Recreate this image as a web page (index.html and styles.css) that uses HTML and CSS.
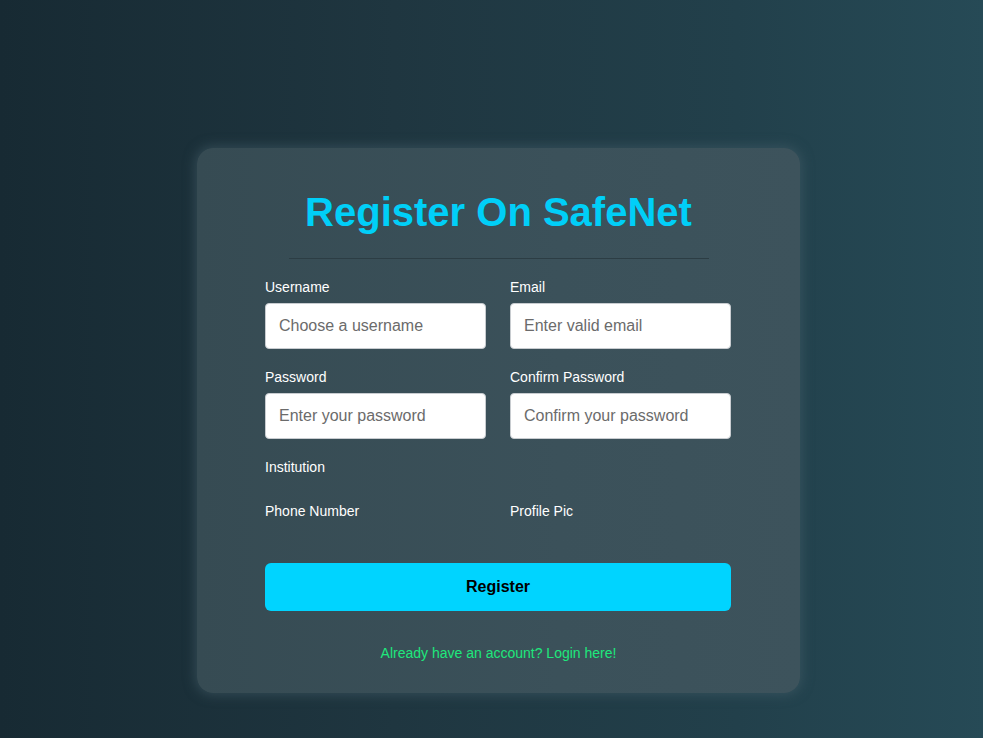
FILE: index.html
```html
<!DOCTYPE html>
<html lang="en">
<head>
<meta charset="utf-8">
<title>Register On SafeNet</title>
<link rel="stylesheet" href="styles.css">
</head>
<body>
<main class="page">
  <section class="card">
    <h1 class="title">Register On SafeNet</h1>
    <form class="form">
      <div class="grid">
        <div class="group">
          <label class="label" for="u">Username</label>
          <input class="input" id="u" type="text" placeholder="Choose a username">
        </div>
        <div class="group">
          <label class="label" for="e">Email</label>
          <input class="input" id="e" type="email" placeholder="Enter valid email">
        </div>
        <div class="group">
          <label class="label" for="p">Password</label>
          <input class="input" id="p" type="password" placeholder="Enter your password">
        </div>
        <div class="group">
          <label class="label" for="c">Confirm Password</label>
          <input class="input" id="c" type="password" placeholder="Confirm your password">
        </div>
        <div class="group full">
          <label class="label">Institution</label>
        </div>
        <div class="group">
          <label class="label">Phone Number</label>
        </div>
        <div class="group">
          <label class="label">Profile Pic</label>
        </div>
      </div>
      <button class="btn" type="button">Register</button>
      <p class="login"><a href="#" class="login-link">Already have an account? Login here!</a></p>
    </form>
  </section>
</main>
</body>
</html>
```
FILE: styles.css
```css
* { box-sizing: border-box; }
html, body { margin: 0; height: 100%; }
body {
  font-family: "Liberation Sans", Arial, sans-serif;
  background: linear-gradient(90deg, #172a33 0%, #1f3640 40%, #22404b 75%, #264a56 100%);
  overflow: hidden;
}
.page {
  padding: 148px 183px 0 197px;
}
.card {
  width: 603px;
  height: 545px;
  background: linear-gradient(90deg, #364b53 0%, #3b515a 60%, #3d535c 100%);
  border-radius: 16px;
  box-shadow: 0 0 12px 2px rgba(70, 95, 105, 0.55);
  padding: 41px 68px 0 68px;
}
.title {
  width: 420px;
  margin: 0 auto;
  padding-bottom: 23px;
  border-bottom: 1px solid #2c3d44;
  text-align: center;
  color: #00cff8;
  font-size: 40px;
  line-height: 46px;
  font-weight: 700;
}
.form { margin-top: 20px; }
.grid {
  display: grid;
  grid-template-columns: 221px 221px;
  column-gap: 24px;
  row-gap: 20px;
}
.group { display: flex; flex-direction: column; }
.full { grid-column: 1 / 3; }
.label {
  color: #ffffff;
  font-size: 14px;
  line-height: 16px;
  margin-bottom: 8px;
}
.input {
  height: 46px;
  border: 1px solid #c8ccd0;
  border-radius: 4px;
  background: #ffffff;
  padding: 0 13px;
  font-family: "Liberation Sans", Arial, sans-serif;
  font-size: 16px;
  color: #333;
}
.input::placeholder { color: #6b6b6b; }
.btn {
  display: block;
  width: 466px;
  height: 48px;
  margin-top: 36px;
  border: 0;
  border-radius: 6px;
  background: #00d4ff;
  color: #000;
  font-family: "Liberation Sans", Arial, sans-serif;
  font-size: 16px;
  font-weight: 700;
}
.login {
  margin: 34px 0 0;
  text-align: center;
  font-size: 14px;
  line-height: 16px;
}
.login-link { color: #1ee87c; text-decoration: none; }
```
